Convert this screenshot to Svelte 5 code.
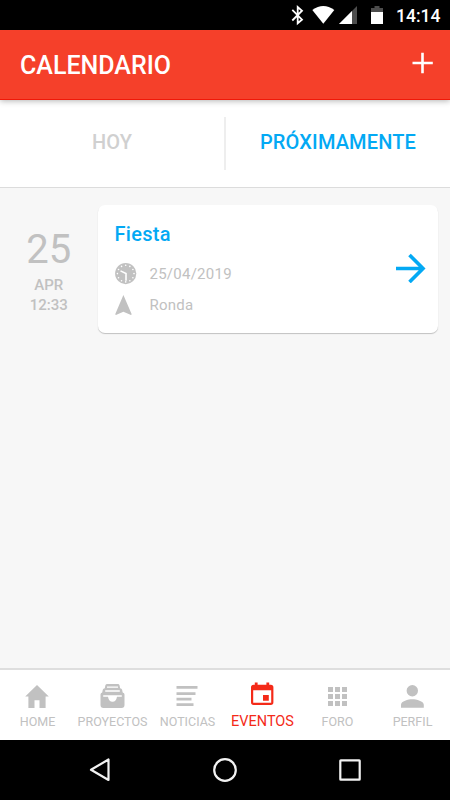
<script>
  let activeFilter = $state('PRÓXIMAMENTE');
  let activeTab = $state('EVENTOS');

  const filters = ['HOY', 'PRÓXIMAMENTE'];

  const events = [
    { day: '25', month: 'APR', time: '12:33', title: 'Fiesta', date: '25/04/2019', place: 'Ronda' },
  ];

  // icons are drawn on a 30x30 grid
  const tabs = [
    { label: 'HOME', path: 'M15 4 3.2 15.5H6.4V27h6.1v-7.8h5V27h6.1V15.5h3.2z' },
    {
      label: 'PROYECTOS',
      path: 'M10.2 3h10.6q1.4 0 1.8 1.4l.5 2.8q1.6 0 2 1.6l.6 2.6q1.8.3 1.8 2.1V24q0 3-3 3h-18q-3 0-3-3V13.5q0-1.8 1.7-2.1l.6-2.6q.4-1.6 2-1.6l.5-2.8Q8.8 3 10.2 3zM10 5.4v1.4h11V5.4zM8.2 9.3v1.5h14.6V9.3zM6.2 14.2v1.6h4.8q.8 5 4.5 5t4.5-5h4.8v-1.6z',
    },
    { label: 'NOTICIAS', path: 'M4.5 5H25.5v2.7H4.5zM4.5 11.2h19v2.7H4.5zM4.5 16.8h15v2.7H4.5zM4.5 22.2h17v2.7H4.5z' },
    {
      label: 'EVENTOS',
      path: 'M7.8 1.5h2.8v2.2h8.8V1.5h2.8v2.2h1.6q2.6 0 2.6 2.6V21.3q0 2.6-2.6 2.6H6.6q-2.6 0-2.6-2.6V6.3q0-2.6 2.6-2.6h1.2zM6.2 9.2v12.5h18V9.2zM16 14h5.8v5.7H16z',
    },
    {
      label: 'FORO',
      path: 'M6 6h5v5H6zM13 6h5v5h-5zM20 6h5v5h-5zM6 13h5v5H6zM13 13h5v5h-5zM20 13h5v5h-5zM6 20h5v5H6zM13 20h5v5h-5zM20 20h5v5h-5z',
    },
    {
      label: 'PERFIL',
      path: 'M15.3 4a5.7 5.7 0 1 1 0 11.4A5.7 5.7 0 1 1 15.3 4zM4 26.8v-3c0-3.6 7.2-5.5 11.3-5.5s11.5 1.9 11.5 5.5v3z',
    },
  ];

  const clockDots = Array.from({ length: 12 }, (_, i) => {
    const angle = (i * Math.PI) / 6;
    return { x: 10.7 + 8.3 * Math.sin(angle), y: 10.6 - 8.3 * Math.cos(angle) };
  });
</script>

<div class="screen">
  <div class="status">
    <svg width="100" height="30" viewBox="0 0 100 30" aria-hidden="true">
      <path d="M6.3 9.8 16 19.6 11.7 23.3V7L16 10.7 6.3 20.5" fill="none" stroke="#fff" stroke-width="1.8" />
      <path d="M26.3 10.1Q37.300 2 48.3 10.1L37.300 23.7z" fill="#fff" />
      <path d="M71 6v18H53z" fill="#4d4d4d" />
      <path d="M66 11V24H53z" fill="#fff" />
      <path d="M88.5 6h5v2H97v4H85V8h3.500z" fill="#4d4d4d" />
      <path d="M85 12h12v12H85z" fill="#fff" />
    </svg>
    <span class="status-time">14:14</span>
  </div>

  <header class="header">
    <h1>CALENDARIO</h1>
    <button class="add" aria-label="Añadir">
      <svg width="22" height="22" viewBox="0 0 22 22">
        <path d="M10.5 .7v20.6M.5 11h20.3" stroke="#fff" stroke-width="2.6" />
      </svg>
    </button>
  </header>

  <div class="filters">
    {#each filters as filter}
      <button class="filter" class:active={activeFilter === filter} onclick={() => (activeFilter = filter)}>
        {filter}
      </button>
    {/each}
  </div>

  <main class="events">
    {#each events as event}
      <div class="event">
        <div class="when">
          <span class="day">{event.day}</span>
          <span class="sub">{event.month}</span>
          <span class="sub">{event.time}</span>
        </div>
        <article class="card">
          <div class="info">
            <h2>{event.title}</h2>
            <div class="row">
              <svg width="22" height="22" viewBox="0 0 22 22" aria-hidden="true">
                <circle cx="10.7" cy="10.6" r="10.6" fill="#c1c1c1" />
                {#each clockDots as dot}
                  <circle cx={dot.x} cy={dot.y} r="0.8" fill="#fff" />
                {/each}
                <path d="M5.500 7.900l5.500 2.700v7.200" fill="none" stroke="#fff" stroke-width="1.600" />
              </svg>
              <span>{event.date}</span>
            </div>
            <div class="row">
              <svg width="22" height="22" viewBox="0 0 22 22" aria-hidden="true">
                <path d="M8.400 1 16.700 20.200l-.7.700-7.600-3.200L.9 20.900l-.7-.7z" fill="#c1c1c1" />
              </svg>
              <span>{event.place}</span>
            </div>
          </div>
          <svg class="arrow" width="30" height="30" viewBox="0 0 30 30" aria-hidden="true">
            <path d="M0 15.500h26.500M13.500 2 27 15.500 13.500 29" fill="none" stroke="#03a9f4" stroke-width="3.600" />
          </svg>
        </article>
      </div>
    {/each}
  </main>

  <nav class="tabs">
    {#each tabs as tab}
      <button class="tab" class:active={activeTab === tab.label} onclick={() => (activeTab = tab.label)}>
        <svg width="31" height="30" viewBox="0 0 31 30" aria-hidden="true">
          <path d={tab.path} fill="currentColor" fill-rule="evenodd" />
        </svg>
        <span>{tab.label}</span>
      </button>
    {/each}
  </nav>

  <div class="system">
    <svg width="30" height="30" viewBox="0 0 30 30"><path d="M23.5 4.5v20.5L6 14.8z" /></svg>
    <svg width="30" height="30" viewBox="0 0 30 30"><circle cx="15" cy="15" r="10.8" /></svg>
    <svg width="30" height="30" viewBox="0 0 30 30"><rect x="5.3" y="5.3" width="19.4" height="19.4" rx="0.5" /></svg>
  </div>
</div>

<style>
  .screen {
    width: 450px;
    height: 800px;
    display: flex;
    flex-direction: column;
    background: #f7f7f7;
    font-family: Roboto, 'Liberation Sans', sans-serif;
    overflow: hidden;
  }

  button {
    background: none;
    border: none;
    padding: 0;
    font: inherit;
    color: inherit;
    cursor: pointer;
  }

  svg { display: block; flex-shrink: 0; }

  .status {
    height: 30px;
    box-sizing: border-box;
    padding-right: 10px;
    display: flex;
    align-items: center;
    justify-content: flex-end;
    gap: 10px;
    background: #000;
    color: #fff;
  }
  .status-time {
    width: 44px;
    font-size: 17.5px;
    font-weight: 500;
    line-height: 30px;
    padding-top: 1px;
  }

  .header {
    height: 70px;
    box-sizing: border-box;
    padding: 0 16px 0 20px;
    display: flex;
    align-items: center;
    justify-content: space-between;
    background: #f5402a;
    color: #fff;
    border-bottom: 1px solid #f01808;
    box-shadow: 0 1px 6px rgba(0, 0, 0, 0.3);
    z-index: 1;
  }
  h1 { margin: 0; padding-top: 2px; font-size: 25px; font-weight: 500; line-height: 30px; }
  .add { margin-bottom: 3px; }

  .filters {
    height: 88px;
    box-sizing: border-box;
    padding: 17px 0;
    display: flex;
    background: #fff;
    border-bottom: 1px solid #dcdcdc;
  }
  .filter {
    flex: 1;
    padding-bottom: 4px;
    font-size: 20px;
    font-weight: 500;
    letter-spacing: 0.15px;
    color: #d0d0d0;
  }
  .filter + .filter { border-left: 2px solid #eee; }
  .filter.active { color: #03a9f4; }

  .events { flex: 1; padding: 17px 12.5px 0 0; }
  .event { display: flex; }

  .when {
    width: 97.5px;
    padding-top: 24px;
    display: flex;
    flex-direction: column;
    align-items: center;
    color: #c1c1c1;
  }
  .day { font-size: 40px; line-height: 42px; margin-bottom: 4px; }
  .sub { font-size: 15px; font-weight: 500; line-height: 20px; }

  .card {
    flex: 1;
    height: 128px;
    box-sizing: border-box;
    padding: 16px 12px 0 17px;
    display: flex;
    justify-content: space-between;
    background: #fff;
    border-radius: 7px;
    box-shadow: 0 1px 1px rgba(0, 0, 0, 0.22);
  }
  h2 {
    margin: 0 0 15px;
    font-size: 20px;
    font-weight: 500;
    line-height: 27px;
    letter-spacing: 0.3px;
    color: #03a9f4;
  }
  .row {
    display: flex;
    align-items: center;
    gap: 13px;
    height: 22px;
    margin-bottom: 9px;
    font-size: 15px;
    letter-spacing: 0.25px;
    color: #c1c1c1;
  }
  .arrow { margin-top: 32px; }

  .tabs {
    height: 72px;
    box-sizing: border-box;
    display: flex;
    background: #fff;
    border-top: 2px solid #dedede;
  }
  .tab {
    width: 75px;
    padding-top: 11px;
    display: flex;
    flex-direction: column;
    align-items: center;
    color: #c1c1c1;
  }
  .tab span { font-size: 12.5px; line-height: 22px; white-space: nowrap; }
  .tab.active { color: #f42a18; }
  .tab.active span { font-size: 14.5px; line-height: 21px; }

  .system {
    height: 60px;
    display: flex;
    align-items: center;
    justify-content: center;
    gap: 95px;
    background: #000;
  }
  .system svg { fill: none; stroke: #f2f2f2; stroke-width: 2.2; stroke-linejoin: round; }
</style>
